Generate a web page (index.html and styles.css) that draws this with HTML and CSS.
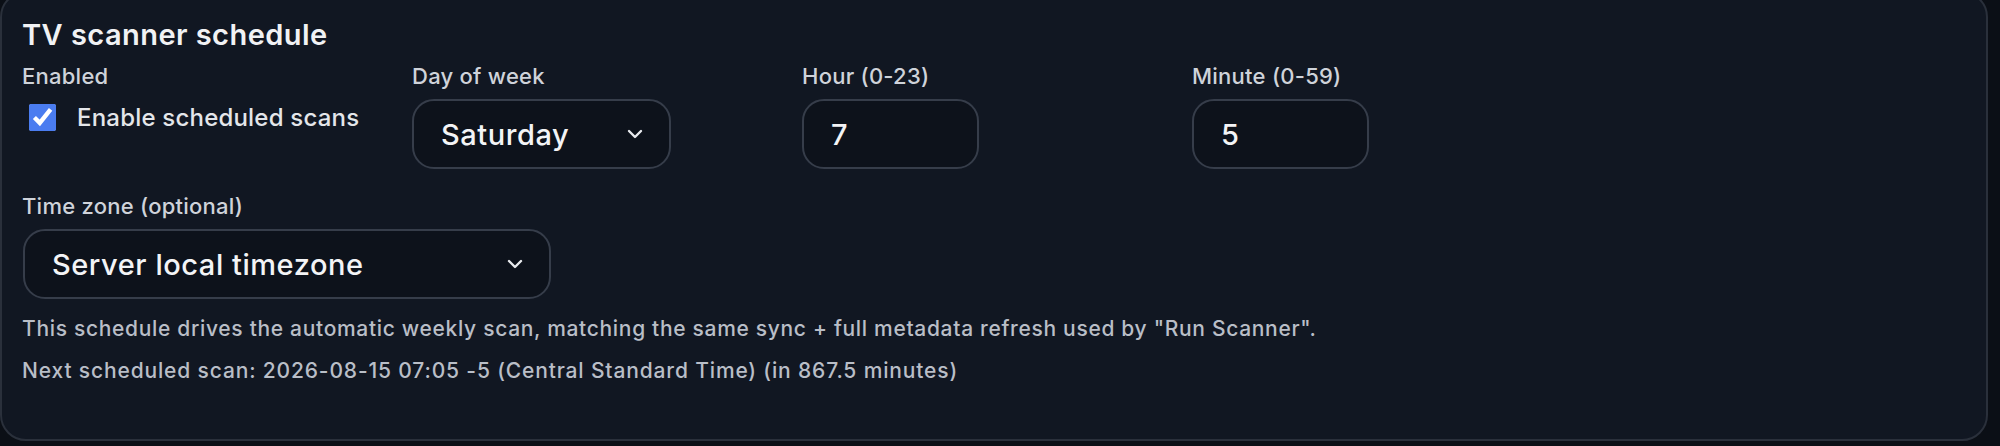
FILE: index.html
```html
<!DOCTYPE html>
<html lang="en">
<head>
  <meta charset="UTF-8">
  <meta name="viewport" content="width=device-width, initial-scale=1.0">
  <title>TV scanner schedule</title>
  <link rel="stylesheet" href="styles.css">
</head>
<body>
<section class="card">
  <h2 class="card-title">TV scanner schedule</h2>

  <div class="field-row">
    <div class="field">
      <span class="field-label">Enabled</span>
      <label class="check">
        <input type="checkbox" checked>
        <span>Enable scheduled scans</span>
      </label>
    </div>

    <div class="field">
      <label class="field-label" for="day">Day of week</label>
      <div class="select-wrap select-day">
        <select id="day">
          <option>Sunday</option>
          <option>Monday</option>
          <option>Tuesday</option>
          <option>Wednesday</option>
          <option>Thursday</option>
          <option>Friday</option>
          <option selected>Saturday</option>
        </select>
        <svg class="chevron" viewBox="0 0 16 10"><path d="M2 2 L8 8 L14 2"/></svg>
      </div>
    </div>

    <div class="field">
      <label class="field-label" for="hour">Hour (0-23)</label>
      <input class="num-input" type="text" id="hour" value="7">
    </div>

    <div class="field">
      <label class="field-label" for="minute">Minute (0-59)</label>
      <input class="num-input" type="text" id="minute" value="5">
    </div>
  </div>

  <div class="field tz-field">
    <label class="field-label" for="tz">Time zone (optional)</label>
    <div class="select-wrap select-tz">
      <select id="tz">
        <option selected>Server local timezone</option>
        <option>UTC</option>
      </select>
      <svg class="chevron" viewBox="0 0 16 10"><path d="M2 2 L8 8 L14 2"/></svg>
    </div>
  </div>

  <p class="help">This schedule drives the automatic weekly scan, matching the same sync + full metadata refresh used by "Run Scanner".</p>
  <p class="help next">Next scheduled scan: 2026-08-15 07:05 -5 (Central Standard Time) (in 867.5 minutes)</p>
</section>
</body>
</html>
```

FILE: styles.css
```css
* {
  margin: 0;
  padding: 0;
  box-sizing: border-box;
}

body {
  background: #0b0f16;
  font-family: 'Inter', 'Liberation Sans', sans-serif;
  color: #e5e7eb;
  height: 446px;
  overflow: hidden;
}

/* Card */
.card {
  margin: -9px 12px 0 0;
  background: #111722;
  border: 2px solid #2a303b;
  border-radius: 26px;
  padding: 24px 20px 53px;
}

.card-title {
  font-size: 29px;
  line-height: 36px;
  font-weight: 600;
  letter-spacing: 0.45px;
  color: #f1f2f4;
  margin-bottom: 9px;
}

.field-row {
  display: grid;
  grid-template-columns: repeat(4, 366px);
  column-gap: 24px;
}

.field {
  display: flex;
  flex-direction: column;
  align-items: flex-start;
}

.field-label {
  font-size: 22px;
  line-height: 28px;
  font-weight: 500;
  letter-spacing: 0.25px;
  color: #cfd3da;
  margin-bottom: 9px;
}

/* Checkbox */
.check {
  display: flex;
  align-items: center;
  gap: 21px;
  height: 36px;
  padding-left: 7px;
  font-size: 24px;
  font-weight: 500;
  letter-spacing: 0.2px;
  color: #e4e6ea;
  cursor: pointer;
}

.check input {
  width: 27px;
  height: 27px;
  margin: 0;
  accent-color: #4a7cf0;
}

/* Selects and number inputs */
.select-wrap {
  position: relative;
}

.select-wrap select,
.num-input {
  appearance: none;
  height: 70px;
  background: #0d121b;
  border: 2px solid #363d4a;
  border-radius: 22px;
  color: #f3f4f6;
  font-family: inherit;
  font-size: 29px;
  font-weight: 500;
  letter-spacing: 0.55px;
  padding: 0 27px;
  outline: none;
}

.select-day select {
  width: 259px;
}

.select-tz select {
  width: 528px;
}

.num-input {
  width: 177px;
}

.chevron {
  position: absolute;
  top: 30px;
  right: 28px;
  width: 16px;
  height: 10px;
  fill: none;
  stroke: #e8eaee;
  stroke-width: 2.4;
  stroke-linecap: round;
  stroke-linejoin: round;
  pointer-events: none;
}

.tz-field {
  margin-top: 23px;
}

.tz-field .select-wrap {
  margin-left: 1px;
}

/* Help text */
.help {
  font-size: 21px;
  line-height: 30px;
  font-weight: 500;
  letter-spacing: 0.68px;
  color: #b9bec7;
  margin-top: 15px;
}

.help.next {
  margin-top: 12px;
  letter-spacing: 0.85px;
}
```
